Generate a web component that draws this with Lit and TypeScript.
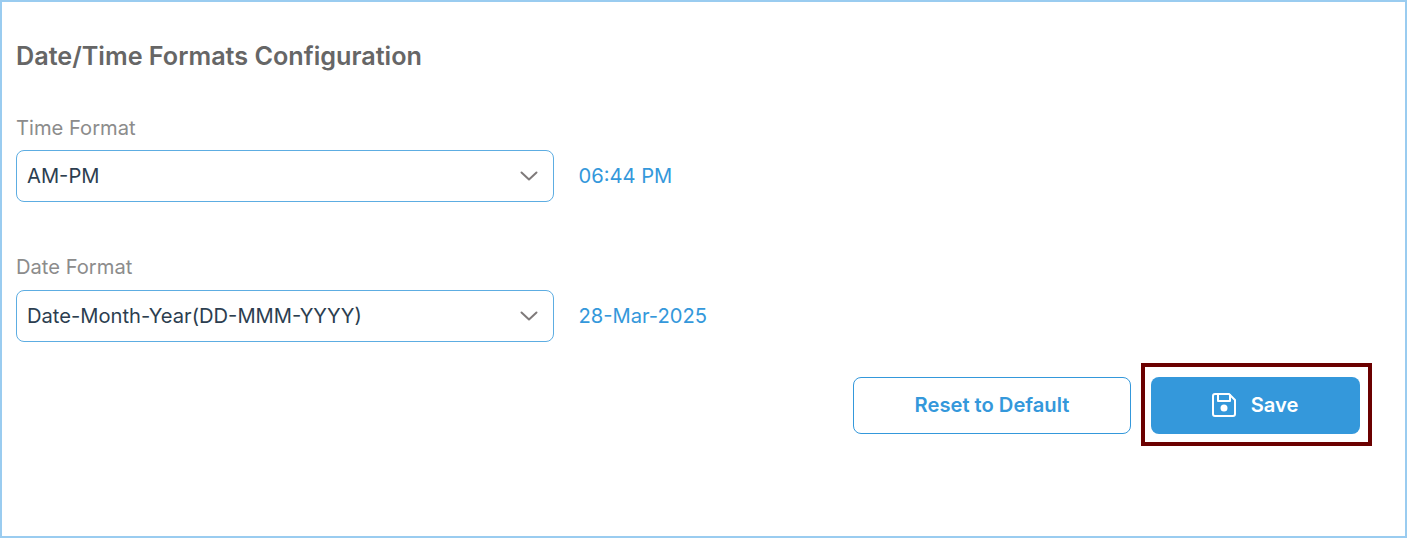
import { LitElement, html, css } from "lit";
import { customElement } from "lit/decorators.js";

const chevron = html`<svg class="chev" width="18" height="10" viewBox="0 0 18 10" fill="none"><path d="M1.5 1.5 9 8.5l7.5-7" stroke="#7f7a7a" stroke-width="2" stroke-linecap="round" stroke-linejoin="round"/></svg>`;

@customElement("app-root")
export class AppRoot extends LitElement {
  static styles = css`
    :host { display: block; width: 1407px; height: 538px; box-sizing: border-box; border: 2px solid #9accf0; background: #fff; font-family: Inter, "Liberation Sans", sans-serif; overflow: hidden; }
    .wrap { display: flex; flex-direction: column; padding: 0 14px; }
    h1 { margin: 0; padding-top: 40px; height: 68px; box-sizing: border-box; font-size: 25.2px; line-height: 28px; font-weight: 600; color: #666; }
    .field { display: flex; flex-direction: column; }
    .t { margin-top: 45px; }
    .d { margin-top: 53px; }
    label { font-size: 20.16px; line-height: 24px; color: #8c8c8c; height: 35px; box-sizing: border-box; }
    .t label { padding-top: 1px; }
    .row { display: flex; align-items: center; gap: 25px; }
    .select { width: 538px; height: 52px; box-sizing: border-box; border: 1px solid #5dade2; border-radius: 8px; display: flex; align-items: center; justify-content: space-between; padding: 0 15px 0 10px; font-size: 20.16px; color: #2c3e50; }
    .select span { padding-bottom: 2px; }
    .value { font-size: 20.16px; color: #3498db; padding-bottom: 2px; margin-left: -0.5px; }
    .actions { display: flex; justify-content: flex-end; align-items: flex-start; gap: 10px; margin-top: 21px; padding-right: 19px; }
    button { font: inherit; font-size: 20.16px; font-weight: 600; height: 57px; border-radius: 8px; box-sizing: border-box; display: flex; align-items: center; justify-content: center; }
    .reset { width: 278px; margin-top: 14px; background: #fff; border: 1px solid #3498db; color: #3498db; padding: 0 0 3px; }
    .mark { border: 4px solid #6b0000; padding: 10px 8px 8px 6px; display: flex; }
    .save { width: 209px; background: #3498db; border: none; color: #fff; gap: 14px; padding: 0 2px 2px 0; }
  `;

  render() {
    return html`<div class="wrap">
      <h1>Date/Time Formats Configuration</h1>
      <div class="field t">
        <label>Time Format</label>
        <div class="row"><div class="select"><span>AM-PM</span>${chevron}</div><span class="value">06:44 PM</span></div>
      </div>
      <div class="field d">
        <label>Date Format</label>
        <div class="row"><div class="select"><span>Date-Month-Year(DD-MMM-YYYY)</span>${chevron}</div><span class="value">28-Mar-2025</span></div>
      </div>
      <div class="actions">
        <button class="reset">Reset to Default</button>
        <div class="mark">
          <button class="save">
            <svg width="26" height="26" viewBox="0 0 26 26" fill="none" stroke="#fff" stroke-width="2" stroke-linecap="round" stroke-linejoin="round"><path d="M2 4a2 2 0 0 1 2-2h14l6 6v14a2 2 0 0 1-2 2H4a2 2 0 0 1-2-2z"/><path d="M7 2v7h12V3"/><circle cx="13" cy="16" r="2.5" fill="#fff"/></svg>
            Save
          </button>
        </div>
      </div>
    </div>`;
  }
}
